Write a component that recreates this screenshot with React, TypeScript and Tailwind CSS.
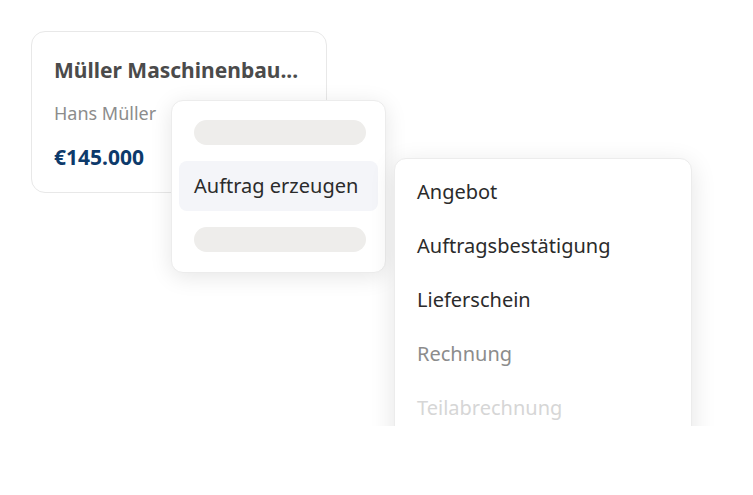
const docTypes = [
  { label: "Angebot", tone: "text-[#2b2b2b]" },
  { label: "Auftragsbestätigung", tone: "text-[#2b2b2b]" },
  { label: "Lieferschein", tone: "text-[#2b2b2b]" },
  { label: "Rechnung", tone: "text-[#8c8c8c]" },
  { label: "Teilabrechnung", tone: "text-[#d6d6d6]" },
]

function CustomerCard() {
  return (
    <div className="absolute left-[31px] top-[31px] w-[296px] h-[162px] rounded-[14px] border border-[#e8e8e8] bg-white pl-[22px] pt-[24px] flex flex-col">
      <p className="text-[21px] leading-[28px] font-bold text-[#4b4b4b]">Müller Maschinenbau...</p>
      <p className="mt-[17px] text-[18px] leading-[24px] text-[#8c8c8c]">Hans Müller</p>
      <p className="mt-[18px] text-[21px] leading-[28px] font-bold text-[#0d3a6b]">€145.000</p>
    </div>
  )
}

function ActionMenu() {
  return (
    <div className="absolute left-[171px] top-[100px] w-[215px] h-[173px] rounded-[12px] border border-[#ececec] bg-white shadow-[0_4px_22px_rgba(0,0,0,0.10)] px-[7px] pt-[19px] flex flex-col gap-[16px]">
      <div className="ml-[15px] mr-[12px] h-[25px] rounded-full bg-[#eeedeb]" />
      <div className="h-[50px] rounded-[8px] bg-[#f4f5f9] pl-[15px] flex items-center">
        <span className="text-[20px] text-[#2b2b2b]">Auftrag erzeugen</span>
      </div>
      <div className="ml-[15px] mr-[12px] h-[25px] rounded-full bg-[#eeedeb]" />
    </div>
  )
}

function DocumentMenu() {
  return (
    <div className="absolute left-[354px] top-[118px] w-[380px] h-[308px] overflow-hidden">
      <div className="ml-[40px] mt-[40px] w-[298px] h-[320px] rounded-[12px] border border-[#ececec] bg-white shadow-[0_6px_26px_rgba(0,0,0,0.11)] pt-[6px] pl-[22px] flex flex-col">
        {docTypes.map((d) => (
          <div key={d.label} className={`h-[54px] flex items-center text-[20px] ${d.tone}`}>
            {d.label}
          </div>
        ))}
      </div>
    </div>
  )
}

export default function App() {
  return (
    <div className="relative w-[753px] h-[495px] bg-white overflow-hidden font-['Noto_Sans',sans-serif]">
      <CustomerCard />
      <ActionMenu />
      <DocumentMenu />
    </div>
  )
}
